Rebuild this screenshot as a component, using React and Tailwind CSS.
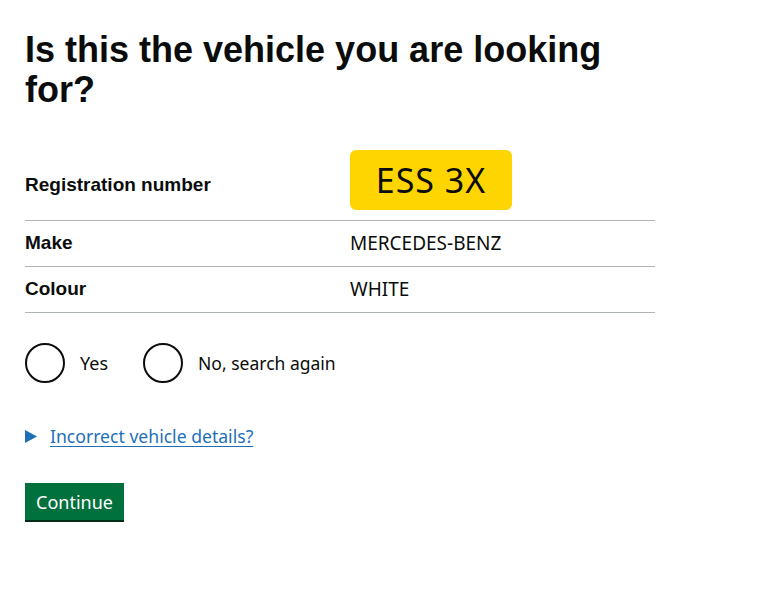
const body = { fontFamily: '"Noto Sans", Arial, sans-serif' };
const bold = { fontFamily: '"Liberation Sans", Arial, sans-serif' };

const rows = [
  { key: "Make", value: "MERCEDES-BENZ" },
  { key: "Colour", value: "WHITE" },
];

export default function App() {
  return (
    <div className="min-h-screen bg-white px-[25px] pt-[30px] text-[#0b0c0c]" style={body}>
      <h1 className="text-[36px] leading-[40px] font-bold w-[610px]" style={bold}>
        Is this the vehicle you are looking for?
      </h1>

      <dl className="mt-[40px] w-[630px]">
        <div className="grid grid-cols-[325px_1fr] items-center pb-[10px] border-b border-[#b1b4b6]">
          <dt className="text-[19px] font-bold pt-[10px]" style={bold}>
            Registration number
          </dt>
          <dd>
            <span className="inline-flex items-center justify-center w-[162px] h-[60px] rounded-[6px] bg-[#ffd500] text-[34px] tracking-[1px]">
              ESS 3X
            </span>
          </dd>
        </div>
        {rows.map((r) => (
          <div
            key={r.key}
            className="grid grid-cols-[325px_1fr] items-center h-[46px] border-b border-[#b1b4b6]"
          >
            <dt className="text-[19px] font-bold" style={bold}>
              {r.key}
            </dt>
            <dd className="text-[19px]">{r.value}</dd>
          </div>
        ))}
      </dl>

      <div className="flex items-center mt-[30px] h-[40px]">
        <label className="flex items-center mr-[35px]">
          <span className="w-[40px] h-[40px] rounded-full border-2 border-[#0b0c0c]" />
          <span className="ml-[15px] text-[18px]">Yes</span>
        </label>
        <label className="flex items-center">
          <span className="w-[40px] h-[40px] rounded-full border-2 border-[#0b0c0c]" />
          <span className="ml-[15px] text-[17.5px]">No, search again</span>
        </label>
      </div>

      <div className="flex items-center mt-[40px]">
        <svg width="12" height="13" viewBox="0 0 12 13" className="mr-[13px]">
          <polygon points="0,0 12,6.5 0,13" fill="#1d70b8" />
        </svg>
        <a
          href="#"
          className="text-[17.6px] text-[#1d70b8] underline underline-offset-[3px] decoration-1"
        >
          Incorrect vehicle details?
        </a>
      </div>

      <button className="mt-[34px] h-[37px] px-[11px] pt-[2px] bg-[#00703c] text-white text-[18px] shadow-[0_2px_0_#002d18]">
        Continue
      </button>
    </div>
  );
}
